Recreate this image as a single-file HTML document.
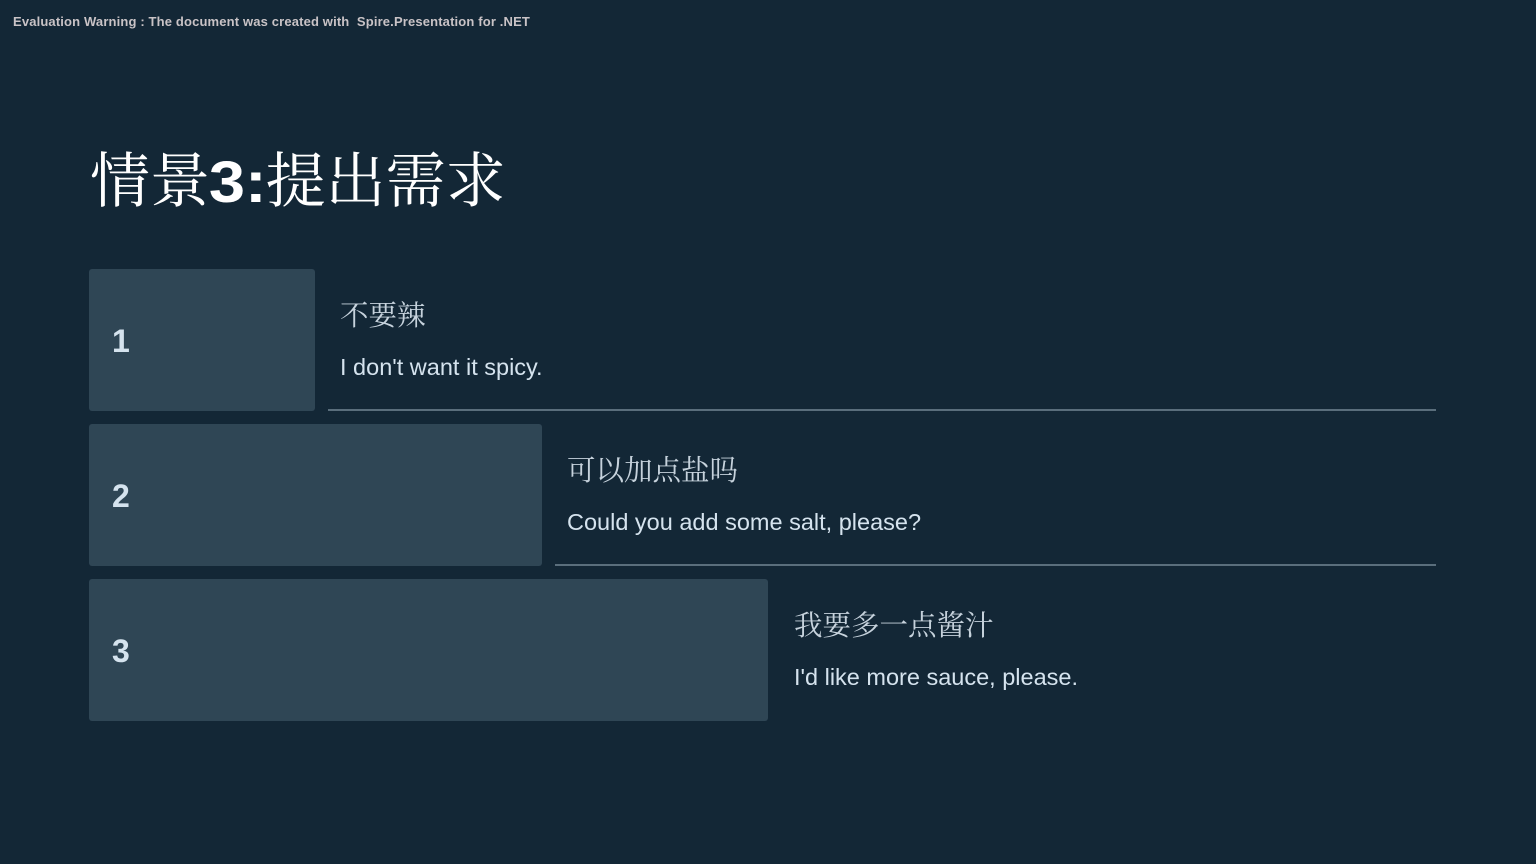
<!DOCTYPE html>
<html><head><meta charset="utf-8"><style>
body{margin:0;width:1536px;height:864px;background:#132736;position:relative;overflow:hidden;font-family:"Liberation Sans","Noto Sans CJK SC",sans-serif}
.w{position:absolute;left:13px;top:14px;font-size:13px;color:#c9c3c6;font-weight:bold;letter-spacing:0.15px}
.t{position:absolute;left:90px;top:146px;font-size:60px;color:#fff;font-family:"Liberation Serif","Noto Serif CJK SC",serif;line-height:72px;white-space:nowrap}
.t b{font-family:"Liberation Sans",sans-serif;font-weight:900;font-size:58px;transform:scaleX(1.12);display:inline-block;margin:0 2px}
.box{position:absolute;left:89px;height:142px;background:#2f4655;border-radius:3px}
.n{position:absolute;left:112px;color:#d5e3ee;font-weight:bold;font-size:32px}
.zh{position:absolute;color:#c6d2dc;font-size:28.5px;font-family:"Liberation Serif","Noto Serif CJK SC",serif}
.en{position:absolute;color:#d5e3ee;font-size:23.5px;font-weight:500}
.ln{position:absolute;height:2px;background:#5a6e7c;right:100px}
</style></head><body>
<div class="w">Evaluation Warning : The document was created with &nbsp;Spire.Presentation for .NET</div>
<div class="t">情景<b>3:</b>提出需求</div>
<div class="box" style="top:269px;width:226px"></div>
<div class="n" style="top:323px">1</div>
<div class="zh" style="left:340px;top:293px">不要辣</div>
<div class="en" style="left:340px;top:354px">I don't want it spicy.</div>
<div class="ln" style="left:328px;top:409px"></div>
<div class="box" style="top:424px;width:453px"></div>
<div class="n" style="top:478px">2</div>
<div class="zh" style="left:567px;top:448px">可以加点盐吗</div>
<div class="en" style="left:567px;top:509px">Could you add some salt, please?</div>
<div class="ln" style="left:555px;top:564px"></div>
<div class="box" style="top:579px;width:679px"></div>
<div class="n" style="top:633px">3</div>
<div class="zh" style="left:794px;top:603px">我要多一点酱汁</div>
<div class="en" style="left:794px;top:664px">I'd like more sauce, please.</div>
</body></html>
